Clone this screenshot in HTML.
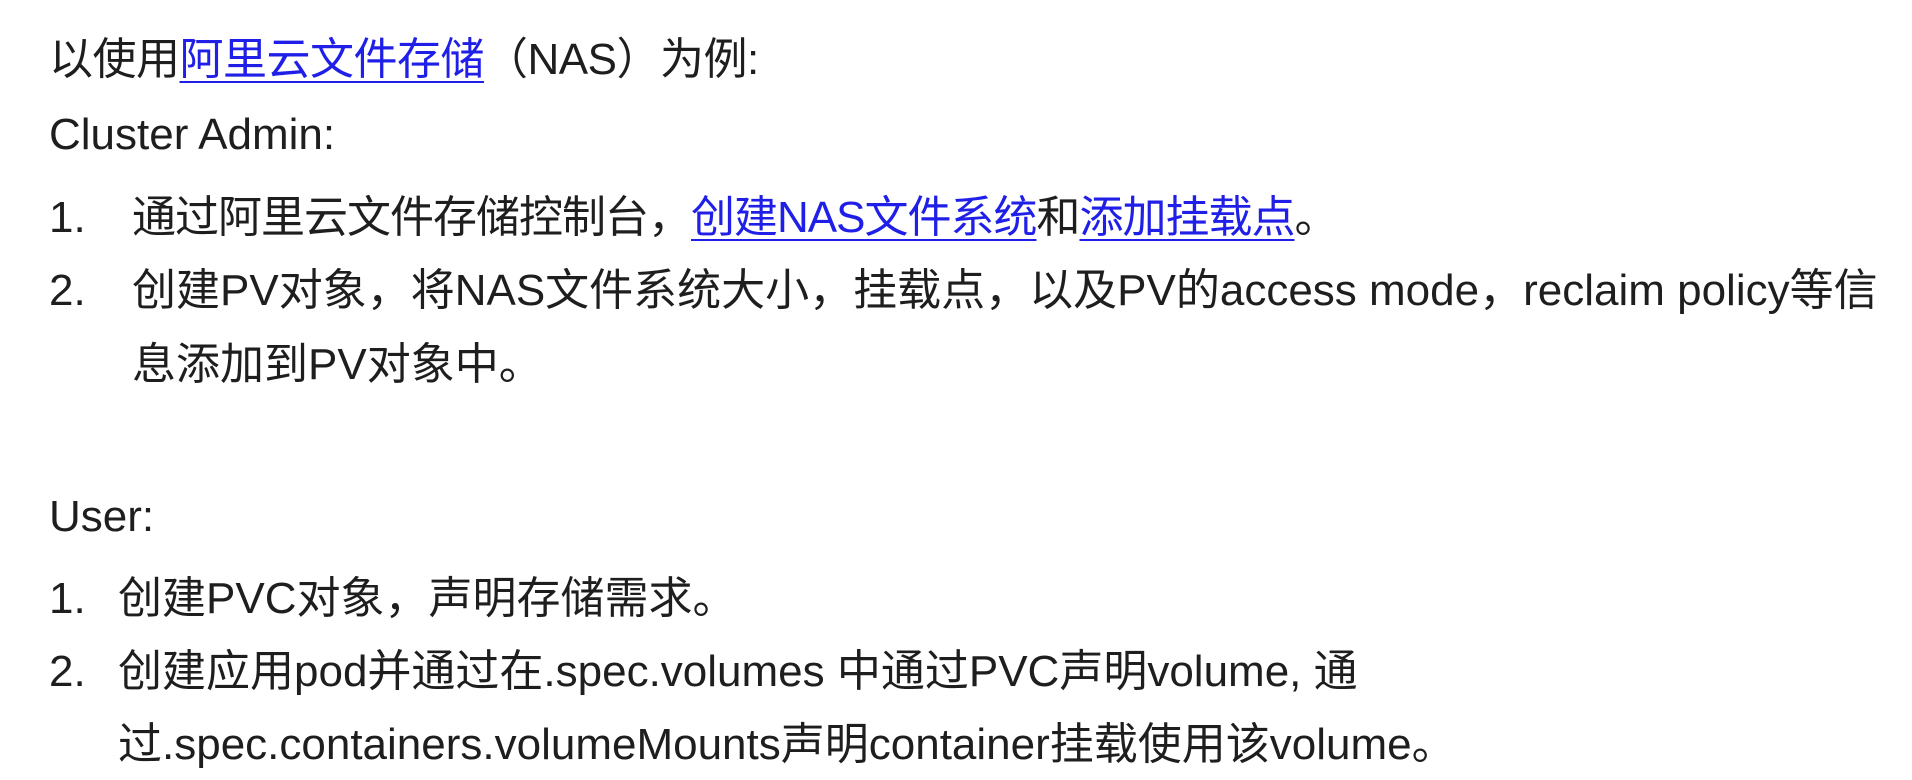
<!DOCTYPE html>
<html><head><meta charset="utf-8"><style>
html,body{margin:0;padding:0;background:#fff;}
body{width:1912px;height:780px;position:relative;overflow:hidden;font-family:"Liberation Sans","Noto Sans CJK SC",sans-serif;font-size:44px;color:#1e1e1e;}
.l{position:absolute;white-space:nowrap;line-height:64px;height:64px;}
a{color:#1f1fe8;text-decoration:underline;text-decoration-thickness:2px;text-underline-offset:7px;}
</style></head><body>
<div class="l" style="left:49px;top:28px;letter-spacing:-0.5px">以使用<a>阿里云文件存储</a>（NAS）为例:</div>
<div class="l" style="left:49px;top:103px">Cluster Admin:</div>
<div class="l" style="left:49px;top:186px">1.</div>
<div class="l" style="left:132px;top:186px;letter-spacing:-1px">通过阿里云文件存储控制台，<a>创建NAS文件系统</a>和<a>添加挂载点</a>。</div>
<div class="l" style="left:49px;top:259px">2.</div>
<div class="l" style="left:132px;top:259px">创建PV对象，将NAS文件系统大小，挂载点，以及PV的access mode，reclaim policy等信</div>
<div class="l" style="left:132px;top:333px">息添加到PV对象中。</div>
<div class="l" style="left:49px;top:485px">User:</div>
<div class="l" style="left:49px;top:567px">1.</div>
<div class="l" style="left:118px;top:567px">创建PVC对象，声明存储需求。</div>
<div class="l" style="left:49px;top:640px">2.</div>
<div class="l" style="left:118px;top:640px">创建应用pod并通过在.spec.volumes 中通过PVC声明volume, 通</div>
<div class="l" style="left:118px;top:713px">过.spec.containers.volumeMounts声明container挂载使用该volume。</div>
</body></html>
